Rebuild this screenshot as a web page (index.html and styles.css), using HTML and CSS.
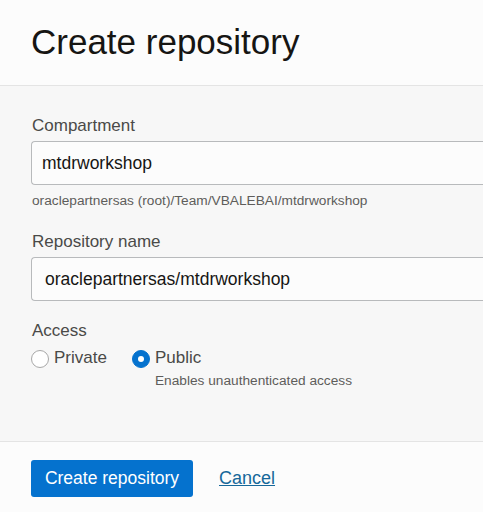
FILE: index.html
```html
<!DOCTYPE html>
<html>
<head>
<meta charset="utf-8">
<link rel="stylesheet" href="styles.css">
</head>
<body>
<div class="panel">
  <header class="header">
    <h1 class="title">Create repository</h1>
  </header>
  <main class="body">
    <div class="field">
      <label class="label">Compartment</label>
      <div class="input">mtdrworkshop</div>
      <div class="hint">oraclepartnersas (root)/Team/VBALEBAI/mtdrworkshop</div>
    </div>
    <div class="field field2">
      <label class="label">Repository name</label>
      <div class="input input2">oraclepartnersas/mtdrworkshop</div>
    </div>
    <div class="field field3">
      <label class="label">Access</label>
      <div class="radios">
        <div class="radio">
          <span class="circle"></span>
          <span class="rtext">Private</span>
        </div>
        <div class="radio">
          <span class="circle checked"></span>
          <div class="rcol">
            <span class="rtext">Public</span>
            <span class="rhint">Enables unauthenticated access</span>
          </div>
        </div>
      </div>
    </div>
  </main>
  <footer class="footer">
    <button class="btn">Create repository</button>
    <a class="cancel" href="#">Cancel</a>
  </footer>
</div>
</body>
</html>
```
FILE: styles.css
```css
html, body {
  margin: 0;
  padding: 0;
  overflow: hidden;
  background: #fcfcfc;
}
body {
  font-family: "Liberation Sans", Arial, sans-serif;
  color: #161513;
  width: 483px;
  height: 512px;
}
.panel {
  width: 483px;
  overflow: hidden;
}
.header {
  height: 86px;
  border-bottom: 1px solid #e4e4e4;
  background: #fcfcfc;
  box-sizing: border-box;
  padding: 22px 0 0 31px;
}
.title {
  margin: 0;
  font-weight: normal;
  font-size: 35px;
  line-height: 40px;
  color: #161513;
}
.body {
  background: #f7f7f7;
  height: 356px;
  box-sizing: border-box;
  padding: 30px 0 0 31px;
  border-bottom: 1px solid #e4e4e4;
}
.field {
  display: flex;
  flex-direction: column;
}
.label {
  font-size: 17px;
  line-height: 20px;
  color: #4a4a48;
  padding-left: 1px;
  margin-bottom: 5px;
}
.input {
  height: 44px;
  box-sizing: border-box;
  border: 1px solid #b8babc;
  border-right: none;
  border-radius: 4px 0 0 4px;
  background: #fcfcfc;
  font-size: 17.5px;
  line-height: 42px;
  padding-left: 10px;
  color: #161513;
  width: 460px;
}
.input2 {
  padding-left: 13px;
}
.hint {
  font-size: 13.7px;
  line-height: 16px;
  color: #5e5d5b;
  margin-top: 8px;
  padding-left: 1px;
}
.field2 {
  margin-top: 23px;
}
.field3 {
  margin-top: 20px;
}
.label + .radios {
  margin-top: 2px;
}
.radios {
  display: flex;
  gap: 25px;
}
.radio {
  display: flex;
  align-items: flex-start;
  gap: 5px;
}
.circle {
  width: 18px;
  height: 18px;
  box-sizing: border-box;
  border: 1px solid #a8a8a8;
  border-radius: 50%;
  background: #fff;
  margin-top: 2px;
  flex-shrink: 0;
}
.circle.checked {
  background: #0572ce;
  border-color: #0572ce;
  position: relative;
}
.circle.checked::after {
  content: "";
  position: absolute;
  left: 5px;
  top: 5px;
  width: 6px;
  height: 6px;
  border-radius: 50%;
  background: #fff;
}
.rcol {
  display: flex;
  flex-direction: column;
}
.rtext {
  font-size: 17px;
  line-height: 20px;
  color: #4a4a48;
}
.rhint {
  font-size: 13.7px;
  line-height: 16px;
  color: #5e5d5b;
  margin-top: 5px;
}
.footer {
  background: #fcfcfc;
  display: flex;
  align-items: center;
  padding: 18px 0 0 31px;
  gap: 26px;
}
.btn {
  height: 37px;
  width: 162px;
  background: #0572ce;
  color: #fff;
  border: none;
  border-radius: 3px;
  font-family: "Liberation Sans", Arial, sans-serif;
  font-size: 17.5px;
  padding: 0;
}
.cancel {
  font-size: 18px;
  color: #16689a;
  text-decoration: underline;
}
```
